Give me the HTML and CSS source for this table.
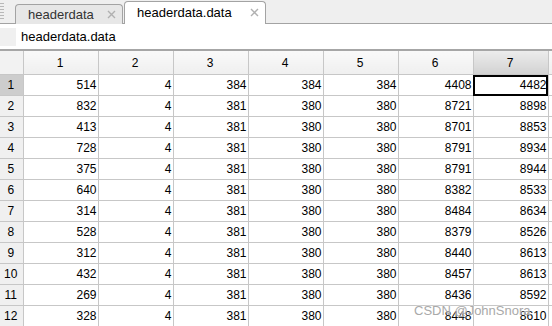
FILE: index.html
```html
<!DOCTYPE html>
<html lang="en">
<head>
  <meta charset="UTF-8" />
  <title>headerdata.data</title>
  <link rel="stylesheet" href="styles.css">
</head>
<body>

  <div class="tab-bar">
    <span class="grip"></span>
    <div class="tab">
      <span class="tab-name">headerdata</span>
      <svg class="tab-close" width="9" height="9" viewBox="0 0 9 9">
        <path d="M1 1L8 8M8 1L1 8" stroke="#b0b0b0" stroke-width="1.4" fill="none"/>
      </svg>
    </div>
    <div class="tab active">
      <span class="tab-name">headerdata.data</span>
      <svg class="tab-close" width="9" height="9" viewBox="0 0 9 9">
        <path d="M1 1L8 8M8 1L1 8" stroke="#b0b0b0" stroke-width="1.4" fill="none"/>
      </svg>
    </div>
  </div>

  <div class="path-bar">
    <span class="path-box"></span>
    <span class="path-text">headerdata.data</span>
  </div>

  <table class="grid" id="grid">
    <colgroup>
      <col class="c-row">
      <col class="c-data"><col class="c-data"><col class="c-data"><col class="c-data">
      <col class="c-data"><col class="c-data"><col class="c-data"><col class="c-data">
    </colgroup>
    <thead>
      <tr>
        <th class="corner"></th>
        <th>1</th><th>2</th><th>3</th><th>4</th><th>5</th><th>6</th>
        <th class="sel">7</th><th></th>
      </tr>
    </thead>
    <tbody id="rows"></tbody>
  </table>

  <div class="watermark">CSDN @JohnSnora</div>

  <script>
    const data = [
      [514, 4, 384, 384, 384, 4408, 4482],
      [832, 4, 381, 380, 380, 8721, 8898],
      [413, 4, 381, 380, 380, 8701, 8853],
      [728, 4, 381, 380, 380, 8791, 8934],
      [375, 4, 381, 380, 380, 8791, 8944],
      [640, 4, 381, 380, 380, 8382, 8533],
      [314, 4, 381, 380, 380, 8484, 8634],
      [528, 4, 381, 380, 380, 8379, 8526],
      [312, 4, 381, 380, 380, 8440, 8613],
      [432, 4, 381, 380, 380, 8457, 8613],
      [269, 4, 381, 380, 380, 8436, 8592],
      [328, 4, 381, 380, 380, 8448, 8610]
    ];

    const body = document.getElementById('rows');
    data.forEach((row, i) => {
      const tr = document.createElement('tr');
      let html = `<th class="${i === 0 ? 'sel' : ''}">${i + 1}</th>`;
      row.forEach((v, j) => {
        html += `<td${i === 0 && j === 6 ? ' class="current"' : ''}>${v}</td>`;
      });
      html += '<td></td>';
      tr.innerHTML = html;
      body.appendChild(tr);
    });
  </script>

</body>
</html>
```

FILE: styles.css
```css
body {
  margin: 0;
  width: 552px;
  height: 326px;
  overflow: hidden;
  background-color: white;
  font-family: "Liberation Sans", Arial, sans-serif;
  font-size: 13px;
  color: #000;
  position: relative;
}

/* Tabs */
.tab-bar {
  height: 23px;
  background-color: #efefef;
  border-bottom: 1px solid #a3a3a3;
  display: flex;
  align-items: flex-end;
}

.grip {
  width: 4px;
  height: 17px;
  margin: 0 11px 3px 0;
  align-self: flex-end;
  background: repeating-linear-gradient(to bottom, #b8b8b8 0 1px, transparent 1px 3px);
}

.tab {
  height: 20px;
  width: 108px;
  box-sizing: border-box;
  border: 1px solid #a3a3a3;
  border-bottom: none;
  border-radius: 4px 4px 0 0;
  background-color: #e7e7e7;
  display: flex;
  align-items: center;
  padding: 0 6px 0 12px;
  margin-bottom: -1px;
  color: #333;
}

.tab.active {
  height: 23px;
  width: 142px;
  background-color: white;
  margin-left: 1px;
  padding-left: 12px;
  padding-bottom: 1px;
  color: #000;
}

.tab-name {
  flex: 1;
}

.tab-close {
  display: block;
}

/* Path */
.path-bar {
  height: 25px;
  display: flex;
  align-items: center;
  border-bottom: 2px solid #a6a6a6;
}

.path-box {
  width: 16px;
  height: 18px;
  background-color: #f0f0f0;
  margin-right: 5px;
}

/* Grid */
.grid {
  border-collapse: collapse;
  table-layout: fixed;
  width: 600px;
}

.c-row { width: 23px; }
.c-data { width: 75px; }

.grid th,
.grid td {
  border: 1px solid #c7c7c7;
  padding: 0 1px 0 0;
  font-weight: normal;
  font-size: 12px;
  white-space: nowrap;
  overflow: hidden;
}

.grid tr > :first-child { border-left: none; }

.grid thead th {
  height: 23px;
  border-top: none;
  text-align: center;
  background: linear-gradient(to bottom, #f9f9f9, #efefef);
}

.grid thead th.corner {
  background: #f2f2f2;
}

.grid thead th.sel {
  background: linear-gradient(to bottom, #ececec, #d2d2d2);
}

.grid tbody th {
  height: 20px;
  text-align: center;
  background-color: #f0f0f0;
}

.grid tbody th.sel {
  background-color: #cdcdcd;
}

.grid td {
  text-align: right;
}

.grid td.current {
  outline: 2px solid #000;
  outline-offset: -2px;
}

.watermark {
  position: absolute;
  left: 414px;
  top: 303px;
  font-size: 13px;
  color: #a9a9a9;
  text-shadow: 0 0 2px white;
}
```
